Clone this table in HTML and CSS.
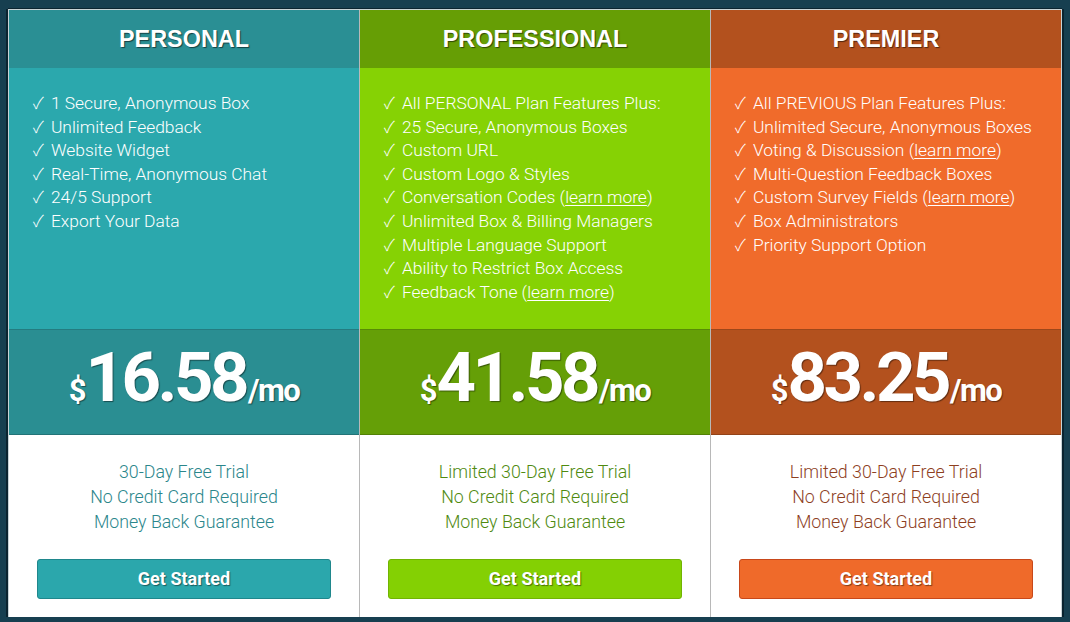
FILE: index.html
```html
<!DOCTYPE html>
<html>
<head>
<meta charset="utf-8">
<link rel="stylesheet" href="styles.css">
</head>
<body>
<div class="plans">
  <div class="plan personal">
    <div class="head">PERSONAL</div>
    <ul class="features">
      <li><span class="ck">✓</span> 1 Secure, Anonymous Box</li>
      <li><span class="ck">✓</span> Unlimited Feedback</li>
      <li><span class="ck">✓</span> Website Widget</li>
      <li><span class="ck">✓</span> Real-Time, Anonymous Chat</li>
      <li><span class="ck">✓</span> 24/5 Support</li>
      <li><span class="ck">✓</span> Export Your Data</li>
    </ul>
    <div class="price"><span class="cur">$</span><span class="amt">16.58</span><span class="per">/mo</span></div>
    <div class="foot">
      <div class="terms">30-Day Free Trial<br>No Credit Card Required<br>Money Back Guarantee</div>
      <a class="btn">Get Started</a>
    </div>
  </div>
  <div class="plan professional">
    <div class="head">PROFESSIONAL</div>
    <ul class="features">
      <li><span class="ck">✓</span> All PERSONAL Plan Features Plus:</li>
      <li><span class="ck">✓</span> 25 Secure, Anonymous Boxes</li>
      <li><span class="ck">✓</span> Custom URL</li>
      <li><span class="ck">✓</span> Custom Logo &amp; Styles</li>
      <li><span class="ck">✓</span> Conversation Codes (<a>learn more</a>)</li>
      <li><span class="ck">✓</span> Unlimited Box &amp; Billing Managers</li>
      <li><span class="ck">✓</span> Multiple Language Support</li>
      <li><span class="ck">✓</span> Ability to Restrict Box Access</li>
      <li><span class="ck">✓</span> Feedback Tone (<a>learn more</a>)</li>
    </ul>
    <div class="price"><span class="cur">$</span><span class="amt">41.58</span><span class="per">/mo</span></div>
    <div class="foot">
      <div class="terms">Limited 30-Day Free Trial<br>No Credit Card Required<br>Money Back Guarantee</div>
      <a class="btn">Get Started</a>
    </div>
  </div>
  <div class="plan premier">
    <div class="head">PREMIER</div>
    <ul class="features">
      <li><span class="ck">✓</span> All PREVIOUS Plan Features Plus:</li>
      <li><span class="ck">✓</span> Unlimited Secure, Anonymous Boxes</li>
      <li><span class="ck">✓</span> Voting &amp; Discussion (<a>learn more</a>)</li>
      <li><span class="ck">✓</span> Multi-Question Feedback Boxes</li>
      <li><span class="ck">✓</span> Custom Survey Fields (<a>learn more</a>)</li>
      <li><span class="ck">✓</span> Box Administrators</li>
      <li><span class="ck">✓</span> Priority Support Option</li>
    </ul>
    <div class="price"><span class="cur">$</span><span class="amt">83.25</span><span class="per">/mo</span></div>
    <div class="foot">
      <div class="terms">Limited 30-Day Free Trial<br>No Credit Card Required<br>Money Back Guarantee</div>
      <a class="btn">Get Started</a>
    </div>
  </div>
</div>
</body>
</html>
```
FILE: styles.css
```css
html, body {
  margin: 0;
  padding: 0;
  background: #173f50;
  height: 622px;
  overflow: hidden;
}
body {
  padding: 9px 8px 0 8px;
  box-sizing: border-box;
}
.plans {
  display: flex;
  width: 1052px;
  border: 1px solid #c9d3d6;
  border-bottom: none;
  box-shadow: -2px 0 0 #0b2430, 2px 0 0 #0b2430, 0 -1px 0 #0b2430;
  background: #fff;
  font-family: Roboto, "Liberation Sans", sans-serif;
}
.plan {
  flex: 1;
  display: flex;
  flex-direction: column;
  min-width: 0;
}
.plan + .plan {
  border-left: 1px solid #b8b8b8;
}
.head {
  height: 58px;
  display: flex;
  align-items: center;
  justify-content: center;
  font-family: "Liberation Sans", Arial, sans-serif;
  font-weight: bold;
  font-size: 23.4px;
  color: #fff;
  text-shadow: 1px 1px 1px rgba(0,0,0,.55);
  padding-top: 1px;
  box-sizing: border-box;
}
.features {
  list-style: none;
  margin: 0;
  height: 261px;
  box-sizing: border-box;
  padding: 24px 0 0 24px;
  font-weight: 300;
  font-size: 17.4px;
  line-height: 23.6px;
  color: #fff;
  white-space: nowrap;
}
.features .ck {
  font-family: "Noto Sans CJK SC", "DejaVu Sans", sans-serif;
  font-weight: 300;
  font-size: 16.2px;
  line-height: 1;
  margin-right: 3px;
}
.features a {
  color: #fff;
  text-decoration: underline;
  text-underline-offset: 2px;
}
.price {
  height: 106px;
  box-sizing: border-box;
  border-top: 1px solid rgba(0,0,0,.12);
  border-bottom: 1px solid rgba(0,0,0,.18);
  display: flex;
  align-items: baseline;
  justify-content: center;
  padding-top: 3px;
  color: #fff;
  font-weight: bold;
  text-shadow: 1px 1px 1px rgba(0,0,0,.45);
}
.price .cur {
  font-size: 31px;
  line-height: 90px;
}
.price .amt {
  font-size: 69px;
  letter-spacing: -3.6px;
  line-height: 90px;
  margin-left: -1px;
}
.price .per {
  font-size: 31px;
  letter-spacing: -1.5px;
  line-height: 90px;
  margin-left: 2px;
}
.foot {
  height: 182px;
  box-sizing: border-box;
  padding: 24px 28px 0 28px;
  display: flex;
  flex-direction: column;
  align-items: stretch;
}
.terms {
  text-align: center;
  font-weight: 300;
  font-size: 17.8px;
  line-height: 25px;
}
.btn {
  margin-top: 25px;
  height: 40px;
  box-sizing: border-box;
  border-radius: 3px;
  border: 1px solid rgba(0,0,0,.18);
  display: flex;
  align-items: center;
  justify-content: center;
  color: #fff;
  font-weight: bold;
  font-size: 18px;
  text-shadow: 1px 1px 1px rgba(0,0,0,.45);
  padding-bottom: 1px;
}

.personal .head { background: #2a8f94; }
.personal .features { background: #2ba8ad; }
.personal .price { background: #2a8e92; }
.personal .terms { color: #2b868b; }
.personal .btn { background: #2ba7ac; border-color: #1f878c; }

.professional .head { background: #669e05; }
.professional .features { background: #86d204; }
.professional .price { background: #659f07; }
.professional .terms { color: #4f8a10; }
.professional .btn { background: #84d003; border-color: #71b402; }

.premier .head { background: #b3511e; }
.premier .features { background: #f06b2b; }
.premier .price { background: #b3511e; }
.premier .terms { color: #8e3f1f; }
.premier .btn { background: #ef6a2a; border-color: #c8481a; }
```
